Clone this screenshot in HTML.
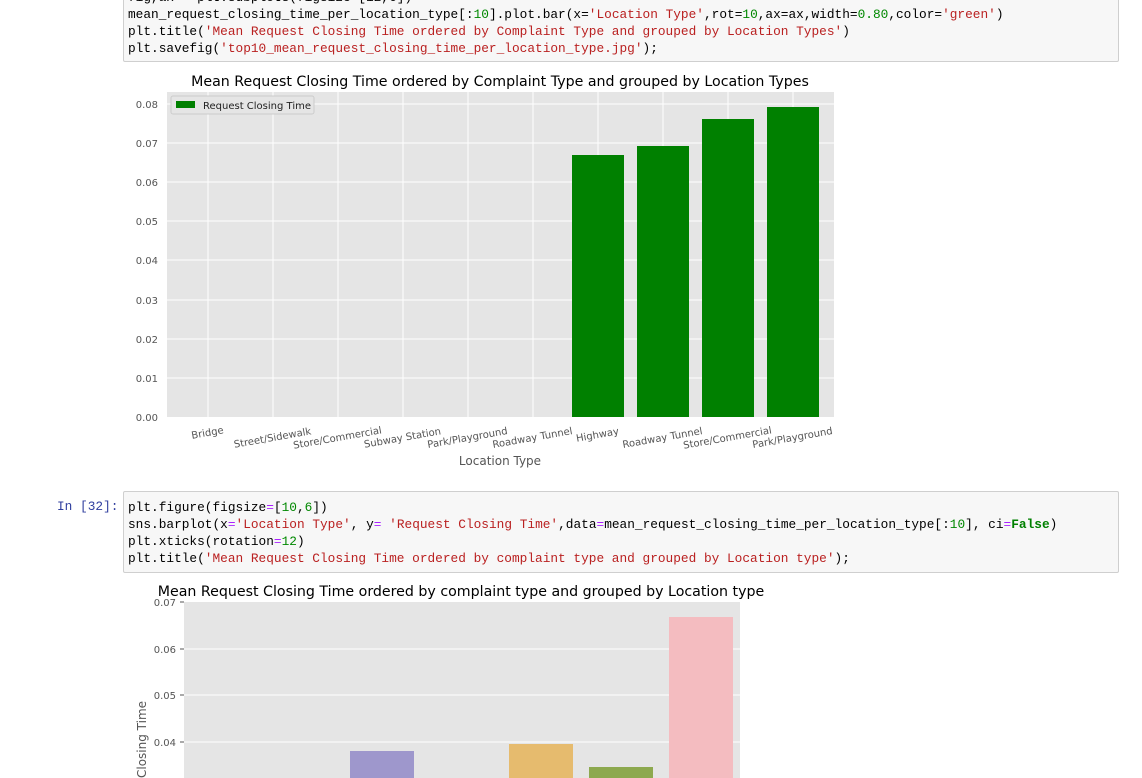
<!DOCTYPE html>
<html><head><meta charset="utf-8"><style>
body{margin:0;width:1142px;height:778px;background:#fff;overflow:hidden;position:relative;font-family:"Liberation Sans","DejaVu Sans",sans-serif}
.box{position:absolute;left:123px;width:994px;background:#f7f7f7;border:1px solid #cfcfcf;border-radius:2px}
.code{position:absolute;left:128px;font-family:"Liberation Mono","DejaVu Sans Mono",monospace;font-size:12.8px;line-height:17px;color:#000;white-space:pre}
.s{color:#ba2121}.n{color:#080}.o{color:#a2f}.k{color:#008000;font-weight:bold}
.prompt{position:absolute;left:57px;font-family:"Liberation Mono",monospace;font-size:12.8px;color:#303f9f}
svg text{font-family:"DejaVu Sans","Liberation Sans",sans-serif}
</style></head><body>
<div class="box" style="top:-2px;height:62px"></div>
<div class="code" style="top:-11px">fig,ax = plt.subplots(figsize=[12,6])
mean_request_closing_time_per_location_type[:<span class="n">10</span>].plot.bar(x=<span class="s">'Location Type'</span>,rot=<span class="n">10</span>,ax=ax,width=<span class="n">0.80</span>,color=<span class="s">'green'</span>)
plt.title(<span class="s">'Mean Request Closing Time ordered by Complaint Type and grouped by Location Types'</span>)
plt.savefig(<span class="s">'top10_mean_request_closing_time_per_location_type.jpg'</span>);</div>

<svg style="position:absolute;left:0;top:0" width="1142" height="480">
<text x="500" y="86" font-size="14.2" text-anchor="middle" fill="#000">Mean Request Closing Time ordered by Complaint Type and grouped by Location Types</text>
<rect x="167" y="92" width="667" height="325" fill="#e5e5e5"/>
<g stroke="#fff" stroke-width="1">
<line x1="167" x2="834" y1="104" y2="104"/><line x1="167" x2="834" y1="143" y2="143"/><line x1="167" x2="834" y1="182" y2="182"/><line x1="167" x2="834" y1="221" y2="221"/><line x1="167" x2="834" y1="260" y2="260"/><line x1="167" x2="834" y1="300" y2="300"/><line x1="167" x2="834" y1="339" y2="339"/><line x1="167" x2="834" y1="378" y2="378"/>
<line x1="208" x2="208" y1="92" y2="417"/><line x1="273" x2="273" y1="92" y2="417"/><line x1="338" x2="338" y1="92" y2="417"/><line x1="403" x2="403" y1="92" y2="417"/><line x1="468" x2="468" y1="92" y2="417"/><line x1="533" x2="533" y1="92" y2="417"/><line x1="598" x2="598" y1="92" y2="417"/><line x1="663" x2="663" y1="92" y2="417"/><line x1="728" x2="728" y1="92" y2="417"/><line x1="793" x2="793" y1="92" y2="417"/>
</g>
<g fill="#008000"><rect x="572" y="155" width="52" height="262"/><rect x="637" y="146" width="52" height="271"/><rect x="702" y="119" width="52" height="298"/><rect x="767" y="107" width="52" height="310"/></g>
<rect x="171" y="96" width="143" height="18" fill="#e5e5e5" stroke="#ccc" rx="2"/>
<rect x="176" y="101" width="19" height="7" fill="#008000"/>
<text x="203" y="109" font-size="10" fill="#222">Request Closing Time</text>
<g font-size="10" fill="#555" text-anchor="end">
<text x="158" y="108">0.08</text><text x="158" y="147">0.07</text><text x="158" y="186">0.06</text><text x="158" y="225">0.05</text><text x="158" y="264">0.04</text><text x="158" y="304">0.03</text><text x="158" y="343">0.02</text><text x="158" y="382">0.01</text><text x="158" y="421">0.00</text>
</g>
<g font-size="10" fill="#555" text-anchor="middle">
<text transform="translate(208,436) rotate(-10)">Bridge</text>
<text transform="translate(273,441) rotate(-10)">Street/Sidewalk</text>
<text transform="translate(338,441) rotate(-10)">Store/Commercial</text>
<text transform="translate(403,441) rotate(-10)">Subway Station</text>
<text transform="translate(468,441) rotate(-10)">Park/Playground</text>
<text transform="translate(533,441) rotate(-10)">Roadway Tunnel</text>
<text transform="translate(598,438) rotate(-10)">Highway</text>
<text transform="translate(663,441) rotate(-10)">Roadway Tunnel</text>
<text transform="translate(728,441) rotate(-10)">Store/Commercial</text>
<text transform="translate(793,441) rotate(-10)">Park/Playground</text>
</g>
<text x="500" y="465" font-size="12" fill="#555" text-anchor="middle">Location Type</text>
</svg>

<div class="prompt" style="top:499px">In [32]:</div>
<div class="box" style="top:491px;height:80px"></div>
<div class="code" style="top:499px">plt.figure(figsize<span class="o">=</span>[<span class="n">10</span>,<span class="n">6</span>])
sns.barplot(x<span class="o">=</span><span class="s">'Location Type'</span>, y<span class="o">=</span> <span class="s">'Request Closing Time'</span>,data<span class="o">=</span>mean_request_closing_time_per_location_type[:<span class="n">10</span>], ci<span class="o">=</span><span class="k">False</span>)
plt.xticks(rotation<span class="o">=</span><span class="n">12</span>)
plt.title(<span class="s">'Mean Request Closing Time ordered by complaint type and grouped by Location type'</span>);</div>

<svg style="position:absolute;left:0;top:578px" width="1142" height="200">
<text x="461" y="18" font-size="14.2" text-anchor="middle" fill="#000">Mean Request Closing Time ordered by complaint type and grouped by Location type</text>
<rect x="184" y="24" width="556" height="180" fill="#e5e5e5"/>
<g stroke="#fff"><line x1="184" x2="740" y1="71" y2="71"/><line x1="184" x2="740" y1="117" y2="117"/><line x1="184" x2="740" y1="164" y2="164"/></g>
<rect x="350" y="173" width="64" height="40" fill="#9e97cc"/>
<rect x="509" y="166" width="64" height="40" fill="#e6bb6e"/>
<rect x="589" y="189" width="64" height="20" fill="#8da94f"/>
<rect x="669" y="39" width="64" height="170" fill="#f4bcc0"/>
<g font-size="10" fill="#555" text-anchor="end"><text x="176" y="28">0.07</text><text x="176" y="75">0.06</text><text x="176" y="121">0.05</text><text x="176" y="168">0.04</text></g>
<g stroke="#555"><line x1="180" x2="184" y1="24" y2="24"/><line x1="180" x2="184" y1="71" y2="71"/><line x1="180" x2="184" y1="117" y2="117"/><line x1="180" x2="184" y1="164" y2="164"/></g>
<text transform="translate(146,200) rotate(-90)" font-size="12" fill="#555">Closing Time</text>
</svg>
</body></html>
